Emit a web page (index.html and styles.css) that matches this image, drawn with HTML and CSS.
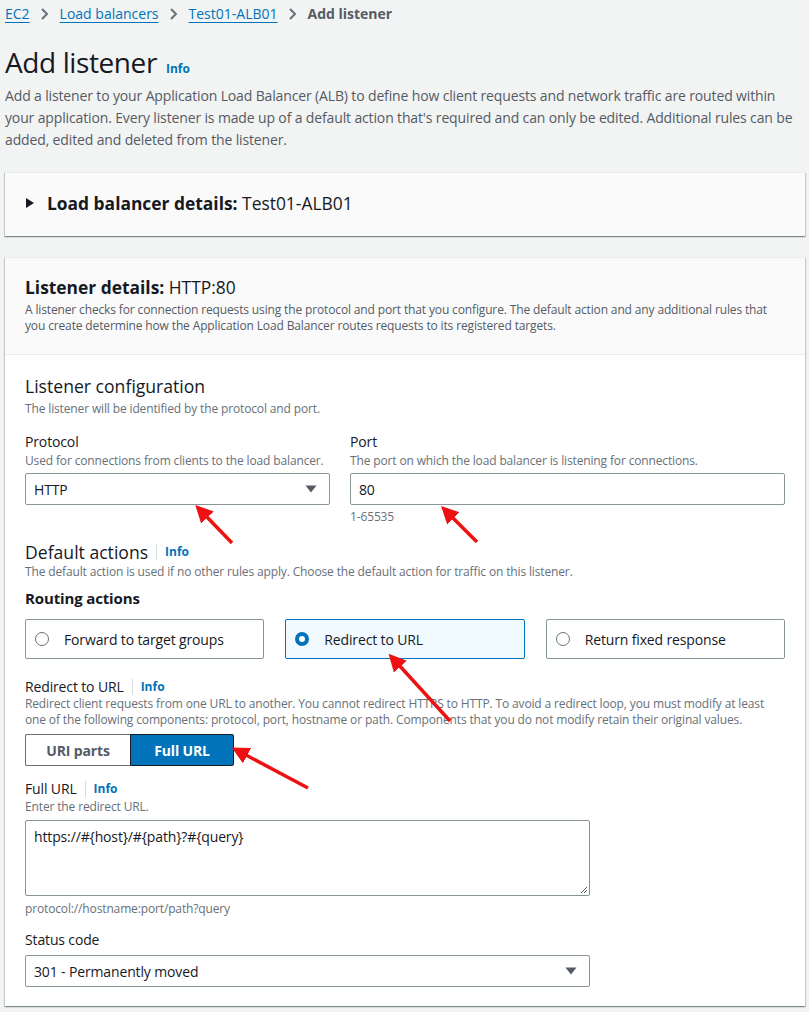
FILE: index.html
```html
<!DOCTYPE html>
<html lang="en">
<head>
<meta charset="utf-8">
<title>Add listener</title>
<link rel="stylesheet" href="styles.css">
</head>
<body>
<div class="page">
  <nav class="crumbs">
    <a class="crumb-link">EC2</a>
    <span class="chev"><svg width="10" height="14" viewBox="0 0 10 14"><path d="M2 2 L7 7 L2 12" fill="none" stroke="#687078" stroke-width="2"/></svg></span>
    <a class="crumb-link">Load balancers</a>
    <span class="chev"><svg width="10" height="14" viewBox="0 0 10 14"><path d="M2 2 L7 7 L2 12" fill="none" stroke="#687078" stroke-width="2"/></svg></span>
    <a class="crumb-link">Test01-ALB01</a>
    <span class="chev"><svg width="10" height="14" viewBox="0 0 10 14"><path d="M2 2 L7 7 L2 12" fill="none" stroke="#687078" stroke-width="2"/></svg></span>
    <span class="crumb-current">Add listener</span>
  </nav>

  <h1 class="title"><span>Add listener</span><a class="info">Info</a></h1>
  <p class="lead">Add a listener to your Application Load Balancer (ALB) to define how client requests and network traffic are routed within your application. Every listener is made up of a default action that's required and can only be edited. Additional rules can be added, edited and deleted from the listener.</p>

  <section class="card card-collapsed">
    <div class="exp-head">
      <svg class="caret" width="10" height="12" viewBox="0 0 10 12"><path d="M1 1 L9 6 L1 11 Z" fill="#16191f"/></svg>
      <h2 class="h2"><b>Load balancer details:</b> Test01-ALB01</h2>
    </div>
  </section>

  <section class="card">
    <div class="card-head">
      <h2 class="h2"><b>Listener details:</b> HTTP:80</h2>
      <p class="head-desc">A listener checks for connection requests using the protocol and port that you configure. The default action and any additional rules that you create determine how the Application Load Balancer routes requests to its registered targets.</p>
    </div>
    <div class="card-body">
      <h3 class="h3">Listener configuration</h3>
      <p class="desc desc-sub">The listener will be identified by the protocol and port.</p>

      <div class="two-col">
        <div class="field">
          <label class="label">Protocol</label>
          <p class="desc">Used for connections from clients to the load balancer.</p>
          <div class="select"><span>HTTP</span><svg class="tri" width="12" height="8" viewBox="0 0 12 8"><path d="M0.5 0.5 L11.5 0.5 L6 7.5 Z" fill="#545b64"/></svg></div>
        </div>
        <div class="field">
          <label class="label">Port</label>
          <p class="desc">The port on which the load balancer is listening for connections.</p>
          <div class="input">80</div>
          <p class="desc constraint">1-65535</p>
        </div>
      </div>

      <h3 class="h3 h3-actions">Default actions <span class="sep"></span><a class="info">Info</a></h3>
      <p class="desc">The default action is used if no other rules apply. Choose the default action for traffic on this listener.</p>

      <h4 class="h4">Routing actions</h4>
      <div class="tiles">
        <div class="tile"><span class="radio"></span><span>Forward to target groups</span></div>
        <div class="tile tile-on"><span class="radio radio-on"></span><span>Redirect to URL</span></div>
        <div class="tile"><span class="radio"></span><span>Return fixed response</span></div>
      </div>

      <div class="label label-gap">Redirect to URL <span class="sep"></span><a class="info">Info</a></div>
      <p class="desc">Redirect client requests from one URL to another. You cannot redirect HTTPS to HTTP. To avoid a redirect loop, you must modify at least one of the following components: protocol, port, hostname or path. Components that you do not modify retain their original values.</p>

      <div class="segments">
        <span class="seg">URI parts</span>
        <span class="seg seg-on">Full URL</span>
      </div>

      <div class="label label-gap2">Full URL <span class="sep"></span><a class="info">Info</a></div>
      <p class="desc">Enter the redirect URL.</p>
      <div class="textarea">https://#{host}/#{path}?#{query}<svg class="grip" width="10" height="10" viewBox="0 0 10 10"><path d="M9 3 L3 9 M9 6 L6 9" stroke="#545b64" stroke-width="1"/></svg></div>
      <p class="desc constraint">protocol://hostname:port/path?query</p>

      <div class="label label-gap2">Status code</div>
      <div class="select select-status"><span>301 - Permanently moved</span><svg class="tri" width="12" height="8" viewBox="0 0 12 8"><path d="M0.5 0.5 L11.5 0.5 L6 7.5 Z" fill="#545b64"/></svg></div>
    </div>
  </section>

  <svg class="arrows" width="809" height="1012" viewBox="0 0 809 1012">
    <defs>
      <marker id="ah" markerWidth="5" markerHeight="5" refX="1" refY="2.5" orient="auto" markerUnits="strokeWidth">
        <path d="M0 0 L5 2.5 L0 5 Z" fill="#ee1111"/>
      </marker>
    </defs>
    <g stroke="#ee1111" stroke-width="3.5" fill="none" marker-end="url(#ah)">
      <line x1="232" y1="543" x2="205" y2="515"/>
      <line x1="477" y1="542" x2="451" y2="516"/>
      <line x1="450" y1="721" x2="398" y2="664"/>
      <line x1="308" y1="788" x2="244" y2="754"/>
    </g>
  </svg>
</div>
</body>
</html>
```

FILE: styles.css
```css
* { box-sizing: border-box; }
html, body { margin: 0; padding: 0; }
body {
  background: #f2f3f3;
  font-family: "Open Sans", "Noto Sans", sans-serif;
  color: #16191f;
  font-size: 14px;
  letter-spacing: -0.01em;
}
.page {
  position: relative;
  padding: 4px 4px 0 5px;
  width: 809px;
  height: 1012px;
  overflow: hidden;
}
.crumbs {
  display: flex;
  align-items: center;
  gap: 10px;
  line-height: 20px;
  font-size: 14px;
  letter-spacing: 0;
}
.crumb-link {
  color: #0073bb;
  text-decoration: underline;
  text-underline-offset: 3px;
}
.chev { display: flex; }
.crumb-current { color: #545b64; font-weight: 700; }

.title {
  margin: 20px 0 0;
  display: flex;
  align-items: baseline;
  gap: 9px;
  font-size: 28px;
  line-height: 36px;
  font-weight: 400;
  letter-spacing: -0.4px;
}
.info {
  color: #0073bb;
  font-weight: 700;
  font-size: 12px;
  line-height: 16px;
  letter-spacing: 0;
}

.lead {
  margin: 5px 0 0;
  line-height: 22px;
  color: #545b64;
  font-size: 14px;
}

.card {
  background: #fff;
  width: 800px;
  box-shadow: 0 1px 1px 0 rgba(0,28,36,.3), 1px 1px 1px 0 rgba(0,28,36,.15), -1px 1px 1px 0 rgba(0,28,36,.15);
  border-top: 1px solid #eaeded;
  margin-top: 21px;
}
.card-collapsed { background: #fafafa; }
.exp-head {
  display: flex;
  align-items: center;
  gap: 12px;
  padding: 18px 20px 21px 20px;
}
.h2 {
  margin: 0;
  font-size: 17.4px;
  line-height: 24px;
  font-weight: 400;
  letter-spacing: 0;
}
.h2 b { font-weight: 700; }

.card-head {
  background: #fafafa;
  padding: 17px 20px 20px;
  border-bottom: 1px solid #eaeded;
}
.head-desc {
  margin: 3px 0 0;
  font-size: 12px;
  line-height: 16px;
  color: #545b64;
}

.card-body { padding: 19px 20px 19px; }
.h3 {
  margin: 0;
  font-size: 17.6px;
  line-height: 24px;
  font-weight: 400;
  letter-spacing: 0;
  display: flex;
  align-items: center;
}
.h3-actions { margin-top: 15px; }
.sep {
  display: inline-block;
  width: 1px;
  height: 16px;
  background: #d5dbdb;
  margin: 0 8px 0 8px;
}
.desc {
  margin: 0;
  font-size: 12px;
  line-height: 16px;
  color: #687078;
}
.desc-sub { margin-top: 3px; }

.two-col {
  display: grid;
  grid-template-columns: 305px 1fr;
  column-gap: 20px;
  margin-top: 15px;
}
.label {
  display: flex;
  align-items: center;
  font-size: 14px;
  line-height: 20px;
}
.label + .desc { margin-top: 1px; }
.select, .input {
  margin-top: 4px;
  height: 32px;
  border: 1px solid #879596;
  border-radius: 2px;
  background: #fff;
  display: flex;
  align-items: center;
  justify-content: space-between;
  padding: 0 12px 0 8px;
  font-size: 14px;
}
.constraint { margin-top: 4px; }

.h4 {
  margin: 8px 0 0;
  font-size: 15px;
  line-height: 20px;
  font-weight: 700;
}
.tiles {
  display: grid;
  grid-template-columns: repeat(3, 1fr);
  column-gap: 21px;
  margin-top: 11px;
}
.tile {
  height: 40px;
  border: 1px solid #879596;
  border-radius: 2px;
  background: #fff;
  display: flex;
  align-items: center;
  gap: 15px;
  padding-left: 9px;
  font-size: 14px;
}
.tile-on {
  background: #f1faff;
  border-color: #0073bb;
}
.radio {
  width: 14px;
  height: 14px;
  border-radius: 50%;
  border: 1px solid #687078;
  background: #fff;
  flex: none;
}
.radio-on {
  border: 4px solid #0073bb;
}

.label-gap { margin-top: 18px; line-height: 20px; }
.label-gap + .desc { margin-top: -1px; }

.segments {
  display: flex;
  margin-top: 6px;
}
.seg {
  height: 32px;
  display: flex;
  align-items: center;
  justify-content: center;
  font-weight: 700;
  font-size: 14px;
  color: #545b64;
  background: #fff;
  border: 1px solid #687078;
  width: 105px;
}
.seg:first-child { border-radius: 2px 0 0 2px; border-right: none; }
.seg-on {
  background: #0073bb;
  color: #fff;
  border-color: #16191f;
  width: 104px;
  border-radius: 0 2px 2px 0;
}

.label-gap2 { margin-top: 14px; line-height: 18px; }
.textarea {
  position: relative;
  margin-top: 5px;
  width: 565px;
  height: 76px;
  border: 1px solid #879596;
  border-radius: 2px;
  background: #fff;
  padding: 6px 8px;
  line-height: 20px;
  font-size: 14px;
}
.grip { position: absolute; right: 1px; bottom: 1px; }
.textarea + .constraint { margin-top: 5px; }
.select-status { width: 565px; margin-top: 6px; }

.arrows {
  position: absolute;
  left: 0;
  top: 0;
  pointer-events: none;
}
```
